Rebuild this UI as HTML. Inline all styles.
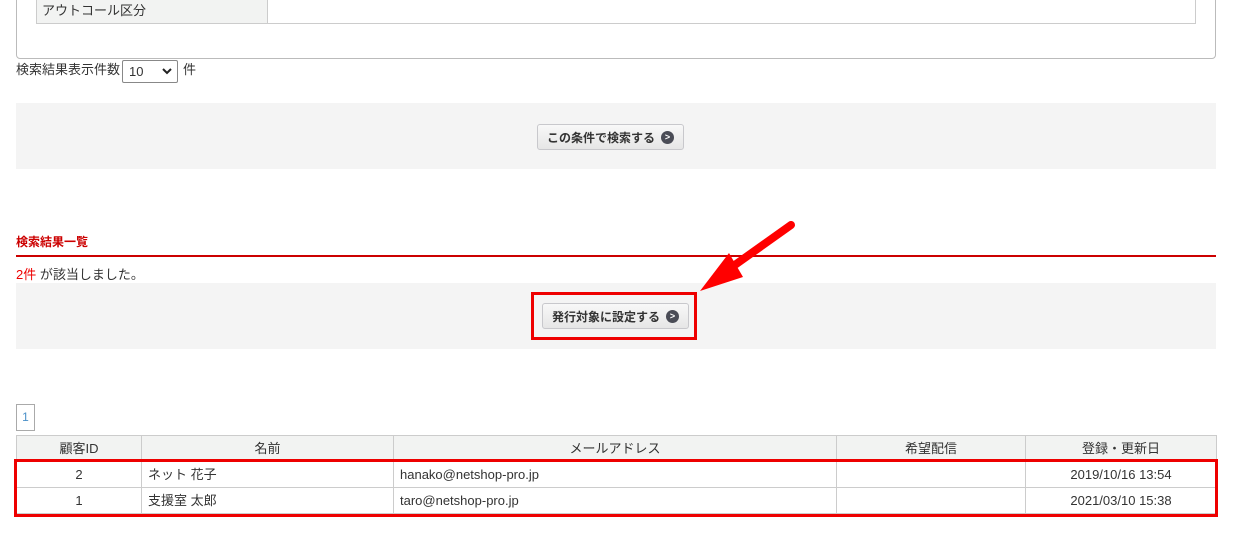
<!DOCTYPE html>
<html><head><meta charset="utf-8"><style>
body{margin:0;width:1239px;height:542px;background:#fff;font-family:"Liberation Sans","Noto Sans CJK JP",sans-serif;font-size:13px;color:#333;position:relative;overflow:hidden}
.a{position:absolute}
.btn{position:absolute;background:linear-gradient(#f8f8f8,#e6e6e6);border:1px solid #c8c8cc;border-radius:3px;font-size:12px;font-weight:bold;color:#333;display:flex;align-items:center;justify-content:center;box-sizing:border-box}
.btn i{display:inline-block;width:13px;height:13px;border-radius:50%;background:#4a4c56;color:#fff;font-style:normal;font-size:9px;line-height:13px;text-align:center;margin-left:6px}
table{position:absolute;border-collapse:collapse;font-size:13px}
td,th{border:1px solid #ccc;padding:0 6px;height:25px;font-weight:normal;line-height:22px}
th{background:#f2f3f2}
</style></head><body>
<div class="a" style="left:16px;top:-5px;width:1198px;height:62px;border:1px solid #bbb;border-radius:0 0 4px 4px"></div>
<div class="a" style="left:36px;top:-1px;width:1158px;height:24px;border:1px solid #ccc;border-top:none"></div>
<div class="a" style="left:37px;top:0;width:231px;height:23px;background:#f2f3f2;border-right:1px solid #ccc;line-height:21px;padding-left:5px;box-sizing:border-box">アウトコール区分</div>
<div class="a" style="left:16px;top:61px;line-height:18px">検索結果表示件数</div>
<div class="a" style="left:122px;top:60px;width:48px;height:21px;border:1px solid #888;border-radius:2px;line-height:21px;padding-left:6px;box-sizing:content-box">10</div>
<svg class="a" style="left:162px;top:67px" width="10" height="8"><path d="M1 2 L5 6 L9 2" stroke="#222" stroke-width="2" fill="none"/></svg>
<div class="a" style="left:183px;top:61px;line-height:18px">件</div>
<div class="a" style="left:16px;top:103px;width:1200px;height:66px;background:#f4f4f4"></div>
<div class="btn" style="left:537px;top:124px;width:147px;height:26px">この条件で検索する<i>&gt;</i></div>
<div class="a" style="left:16px;top:233px;color:#c00;font-weight:bold;font-size:12px">検索結果一覧</div>
<div class="a" style="left:16px;top:255px;width:1200px;height:2px;background:#c00"></div>
<div class="a" style="left:16px;top:264px"><span style="color:#e00">2件</span> が該当しました。</div>
<div class="a" style="left:16px;top:283px;width:1200px;height:66px;background:#f4f4f4"></div>
<div class="btn" style="left:542px;top:303px;width:147px;height:26px">発行対象に設定する<i>&gt;</i></div>
<div class="a" style="left:531px;top:292px;width:160px;height:42px;border:3px solid #e00"></div>
<svg class="a" style="left:690px;top:215px" width="110" height="85"><line x1="101" y1="10" x2="42" y2="52" stroke="#f00" stroke-width="8" stroke-linecap="round"/><polygon points="10,76 39,38 53,62" fill="#f00"/></svg>
<div class="a" style="left:16px;top:404px;width:17px;height:25px;border:1px solid #aaa;color:#4a90c8;font-size:12px;line-height:25px;text-align:center">1</div>
<table style="left:16px;top:435px;width:1201px">
<tr><th style="width:112px">顧客ID</th><th style="width:239px">名前</th><th style="width:430px">メールアドレス</th><th style="width:176px">希望配信</th><th>登録・更新日</th></tr>
<tr><td style="text-align:center">2</td><td>ネット 花子</td><td>hanako@netshop-pro.jp</td><td></td><td style="text-align:center">2019/10/16 13:54</td></tr>
<tr><td style="text-align:center">1</td><td>支援室 太郎</td><td>taro@netshop-pro.jp</td><td></td><td style="text-align:center">2021/03/10 15:38</td></tr>
</table>
<div class="a" style="left:14px;top:459px;width:1198px;height:52px;border:3px solid #e00"></div>
</body></html>
